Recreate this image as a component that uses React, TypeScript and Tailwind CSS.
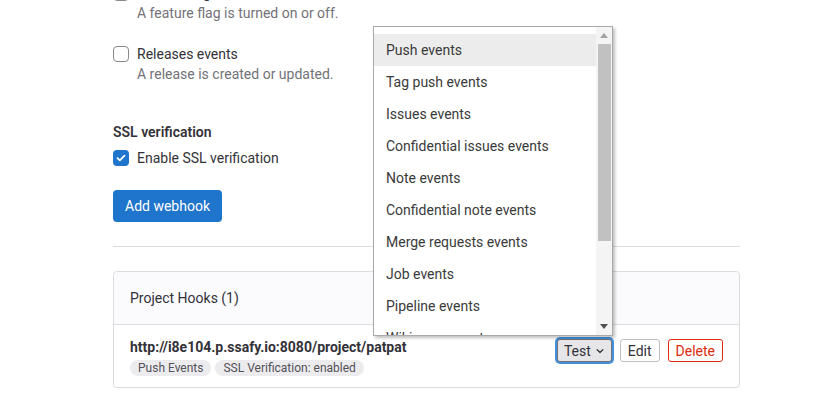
import React from "react";

const events = [
  "Push events",
  "Tag push events",
  "Issues events",
  "Confidential issues events",
  "Note events",
  "Confidential note events",
  "Merge requests events",
  "Job events",
  "Pipeline events",
  "Wiki page events",
];

function Checkbox({ checked }: { checked?: boolean }) {
  if (checked) {
    return (
      <span className="w-4 h-4 rounded-[4px] bg-[#1f75cb] flex items-center justify-center flex-shrink-0">
        <svg width="10" height="8" viewBox="0 0 10 8" fill="none">
          <path d="M1.5 4.2 3.8 6.3 8.5 1.7" stroke="white" strokeWidth="1.8" strokeLinecap="round" strokeLinejoin="round" />
        </svg>
      </span>
    );
  }
  return <span className="block w-4 h-4 rounded-[4px] border border-[#89888d] bg-white flex-shrink-0" />;
}

export default function App() {
  return (
    <main
      className="relative w-[814px] h-[410px] overflow-hidden bg-white text-[14px] text-[#333238]"
      style={{ fontFamily: "Roboto, 'Noto Sans', sans-serif" }}
    >
      <div className="ml-[113px] w-[627px] -mt-[17px]">
        {/* Trigger list tail */}
        <div className="flex gap-2 items-start">
          <span className="block mt-[2px]"><Checkbox /></span>
          <div>
            <div className="leading-5">Feature flag events</div>
            <div className="leading-5 text-[#737278]">A feature flag is turned on or off.</div>
          </div>
        </div>
        <div className="flex gap-2 items-start mt-[21px]">
          <span className="block mt-[2px]"><Checkbox /></span>
          <div>
            <div className="leading-5">Releases events</div>
            <div className="leading-5 text-[#737278]">A release is created or updated.</div>
          </div>
        </div>

        {/* SSL */}
        <div className="mt-[38px] font-semibold leading-5">SSL verification</div>
        <div className="flex gap-2 items-center mt-[6px] leading-5">
          <Checkbox checked />
          <span>Enable SSL verification</span>
        </div>

        <button className="mt-[22px] h-8 px-3 rounded-[4px] bg-[#1f75cb] text-white text-[14px] leading-5">
          Add webhook
        </button>

        <hr className="mt-[24px] border-t border-[#dcdcde]" />

        {/* Project hooks card */}
        <section className="mt-[24px] border border-[#dcdcde] rounded-[4px]">
          <header className="h-[53px] px-4 flex items-center bg-[#fbfafd] border-b border-[#dcdcde] rounded-t-[4px]">
            Project Hooks (1)
          </header>
          <div className="px-4 pt-[12px] pb-[11px] flex items-start justify-between">
            <div>
              <div className="font-bold leading-5">http://i8e104.p.ssafy.io:8080/project/patpat</div>
              <div className="flex gap-1 mt-[3px]">
                <span className="px-2 h-4 leading-4 rounded-full bg-[#ececef] text-[12px] text-[#535158]">Push Events</span>
                <span className="px-2 h-4 leading-4 rounded-full bg-[#ececef] text-[12px] text-[#535158]">SSL Verification: enabled</span>
              </div>
            </div>
            <div className="flex gap-2 pt-[2px]">
              <button className="h-[23px] px-[6px] flex items-center gap-1 rounded-[3px] border border-[#737278] bg-[#e6e6e8] leading-5 ring-2 ring-[#428fdc] ring-offset-0">
                Test
                <svg width="10" height="10" viewBox="0 0 16 16" fill="none">
                  <path d="M3.5 6 8 10.5 12.5 6" stroke="#333238" strokeWidth="2" strokeLinecap="round" strokeLinejoin="round" />
                </svg>
              </button>
              <button className="h-[23px] px-[7px] rounded-[3px] border border-[#bfbfc3] bg-white leading-5">Edit</button>
              <button className="h-[23px] px-[7px] rounded-[3px] border border-[#dd2b0e] bg-white text-[#dd2b0e] leading-5">Delete</button>
            </div>
          </div>
        </section>
      </div>

      {/* Native select dropdown list */}
      <div className="absolute left-[373px] top-[26px] w-[240px] h-[310px] bg-white border border-[#a9a9a9] shadow-[2px_2px_3px_rgba(0,0,0,0.25)] flex overflow-hidden">
        <ul className="flex-1 pt-[7px] overflow-hidden">
          {events.map((e, i) => (
            <li
              key={e}
              className={`h-8 pl-3 flex items-center text-[#3a3a3a] ${i === 0 ? "bg-[#ececec]" : ""}`}
            >
              {e}
            </li>
          ))}
        </ul>
        <div className="w-[16px] bg-[#f4f4f4] flex flex-col items-center">
          <div className="h-[17px] flex items-center justify-center">
            <svg width="8" height="5" viewBox="0 0 8 5"><path d="M0 5 4 0 8 5Z" fill="#a3a3a3" /></svg>
          </div>
          <div className="w-[13px] h-[197px] bg-[#c1c1c1]" />
          <div className="flex-1" />
          <div className="h-[17px] flex items-center justify-center">
            <svg width="8" height="5" viewBox="0 0 8 5"><path d="M0 0 8 0 4 5Z" fill="#505050" /></svg>
          </div>
        </div>
      </div>
    </main>
  );
}
